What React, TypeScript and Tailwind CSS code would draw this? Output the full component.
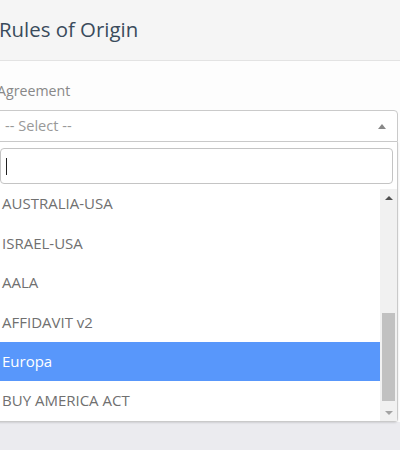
import React from 'react';

const options = ['AUSTRALIA-USA', 'ISRAEL-USA', 'AALA', 'AFFIDAVIT v2', 'Europa', 'BUY AMERICA ACT'];

const App: React.FC = () => {
  const selected = 'Europa';

  return (
    <div className="w-[400px] h-[450px] overflow-hidden bg-[#ebebef] font-['Open_Sans',sans-serif]">
      {/* Header */}
      <div className="h-[61px] bg-[#f5f5f5] border-b border-[#e3e3e3] flex items-center">
        <h1 className="text-[20.4px] text-[#3a4b5c] leading-none ml-[-1px] mt-[-2px]">Rules of Origin</h1>
      </div>

      {/* Body */}
      <div className="h-[361px] bg-[#fdfdfd] pt-[20px]">
        <div className="relative ml-[-4px] w-[402px]">
          <label className="block ml-[1px] text-[14.2px] leading-[20px] text-[#888] mb-[9px]">Agreement</label>

          {/* Select box (open) */}
          <div className="h-[32px] border border-[#cacaca] rounded-t-[4px] bg-white flex items-center justify-between pl-[8px] pr-[8px]">
            <span className="text-[14.6px] text-[#999]">-- Select --</span>
            <span className="w-0 h-0 border-l-[4px] border-r-[4px] border-b-[5px] border-l-transparent border-r-transparent border-b-[#888] mr-[3px]" />
          </div>

          {/* Dropdown */}
          <div className="absolute left-0 right-0 top-full h-[280px] bg-white border-x border-b border-[#cacaca] rounded-b-[4px] shadow-[0_1px_2px_rgba(0,0,0,0.12)] pl-[3px] pr-[4px] pt-[6px]">
            <div className="h-[36px] border border-[#c4c4c4] rounded-[4px] flex items-center pl-[5px]">
              <div className="w-px h-[17px] bg-[#222]" />
            </div>
            <div className="relative mt-[5px] h-[232px] overflow-hidden -ml-[3px] -mr-[4px] flex">
              <div className="flex-1 -mt-[5px]">
                {options.map((o) => (
                  <div
                    key={o}
                    className={`h-[39.4px] flex items-center pl-[5px] text-[15px] ${
                      o === selected ? 'bg-[#5897fb] text-white' : 'text-[#707070]'
                    }`}
                  >
                    {o}
                  </div>
                ))}
              </div>
              {/* Scrollbar */}
              <div className="w-[17px] h-full bg-[#f1f1f1] flex flex-col">
                <div className="h-[17px] flex items-center justify-center">
                  <span className="w-0 h-0 border-l-[4px] border-r-[4px] border-b-[4px] border-l-transparent border-r-transparent border-b-[#505050]" />
                </div>
                <div className="flex-1 relative">
                  <div className="absolute left-[2px] right-[2px] top-[107px] h-[88px] bg-[#c1c1c1]" />
                </div>
                <div className="h-[17px] flex items-center justify-center">
                  <span className="w-0 h-0 border-l-[4px] border-r-[4px] border-t-[4px] border-l-transparent border-r-transparent border-t-[#a3a3a3]" />
                </div>
              </div>
            </div>
          </div>
        </div>
      </div>
    </div>
  );
};

export default App;
